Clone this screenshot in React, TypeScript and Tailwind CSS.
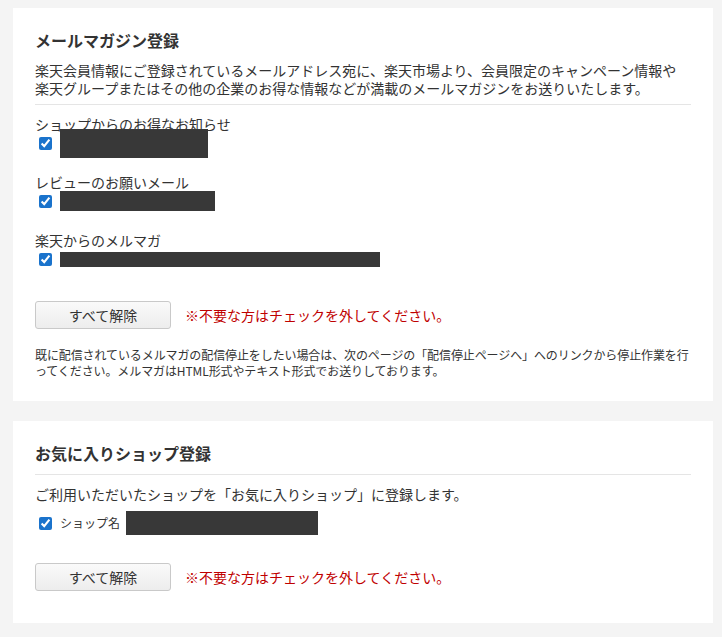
import React from "react";

const FONT = { fontFamily: '"Noto Sans CJK JP", "Noto Sans", sans-serif' };

function Check() {
  return (
    <input
      type="checkbox"
      defaultChecked
      className="ml-1 size-[13px] shrink-0 accent-[#1a73cc]"
    />
  );
}

function Redacted({ w, h }: { w: string; h: string }) {
  return <div className={`${w} ${h} shrink-0 bg-[#383838]`} />;
}

function OptionGroup({
  label,
  bar,
  className = "",
}: {
  label: string;
  bar: React.ReactNode;
  className?: string;
}) {
  return (
    <div className={className}>
      <p className="text-[14px] leading-[18px]">{label}</p>
      <div className="flex h-5 items-center gap-2">
        <Check />
        {bar}
      </div>
    </div>
  );
}

function ResetRow({ className = "" }: { className?: string }) {
  return (
    <div className={`flex items-center ${className}`}>
      <button
        type="button"
        className="h-[28px] w-[136px] rounded-[3px] border border-[#c9c9c9] bg-gradient-to-b from-[#fafafa] to-[#ededed] text-[14px] text-[#333]"
      >
        すべて解除
      </button>
      <span className="ml-[14px] text-[14px] text-[#bf0000]">
        ※不要な方はチェックを外してください。
      </span>
    </div>
  );
}

function Card({ children, className = "" }: { children: React.ReactNode; className?: string }) {
  return <section className={`bg-white px-[22px] ${className}`}>{children}</section>;
}

export default function App() {
  return (
    <div style={FONT} className="min-h-[637px] w-[722px] bg-[#f4f4f4] pt-2 pl-[13px] pr-[9px] text-[#333]">
      <Card className="pt-5 pb-[22px]">
        <h2 className="text-[16px] font-bold leading-[24px]">メールマガジン登録</h2>
        <p className="mt-[9px] text-[14px] leading-[18px]">
          楽天会員情報にご登録されているメールアドレス宛に、楽天市場より、会員限定のキャンペーン情報や
          楽天グループまたはその他の企業のお得な情報などが満載のメールマガジンをお送りいたします。
        </p>
        <hr className="mt-[7px] border-[#e5e5e5]" />

        <OptionGroup
          className="mt-[10px]"
          label="ショップからのお得なお知らせ"
          bar={<Redacted w="w-[148px]" h="h-[29px]" />}
        />
        <OptionGroup
          className="mt-5"
          label="レビューのお願いメール"
          bar={<Redacted w="w-[155px]" h="h-[20px]" />}
        />
        <OptionGroup
          className="mt-5"
          label="楽天からのメルマガ"
          bar={<Redacted w="w-[320px]" h="h-[15px]" />}
        />

        <ResetRow className="mt-8" />

        <p className="mt-[18px] text-[12px] leading-[16px] tracking-[-0.1px]">
          既に配信されているメルマガの配信停止をしたい場合は、次のページの「配信停止ページへ」へのリンクから停止作業を行ってください。メルマガはHTML形式やテキスト形式でお送りしております。
        </p>
      </Card>

      <Card className="mt-5 pt-5 pb-8">
        <h2 className="text-[16px] font-bold leading-[24px]">お気に入りショップ登録</h2>
        <hr className="mt-[9px] border-[#e5e5e5]" />
        <p className="mt-[10px] text-[14px] leading-[18px]">
          ご利用いただいたショップを「お気に入りショップ」に登録します。
        </p>
        <div className="mt-[10px] flex h-5 items-center">
          <Check />
          <span className="ml-2 text-[12px]">ショップ名</span>
          <div className="ml-[6px]">
            <Redacted w="w-[192px]" h="h-[24px]" />
          </div>
        </div>
        <ResetRow className="mt-[30px]" />
      </Card>
    </div>
  );
}
